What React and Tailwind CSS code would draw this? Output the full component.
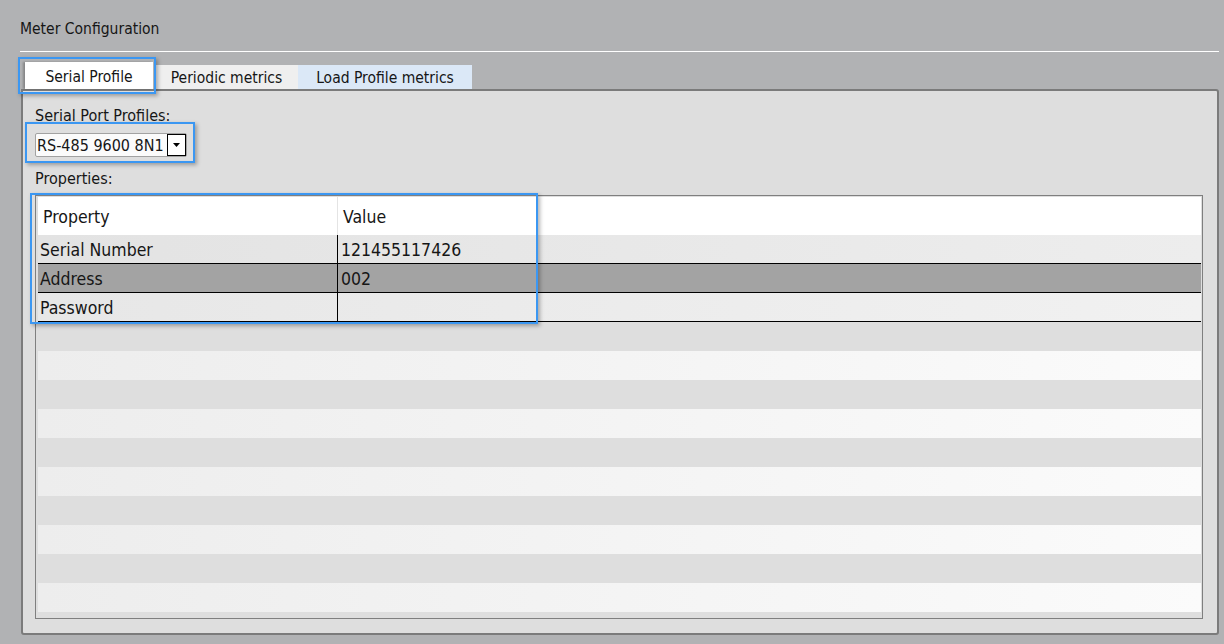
import React from "react";

const F = "font-['DejaVu_Sans_Condensed','Liberation_Sans',sans-serif]";

function Tab({ children, className }) {
  return (
    <div className={`flex items-center justify-center pt-[2px] text-[15.5px] leading-[20px] ${className}`}>
      {children}
    </div>
  );
}

const rows = [
  { k: "Serial Number", v: "121455117426", bg: "bg-linear-to-r from-[#e3e3e3] to-[#ededed]" },
  { k: "Address", v: "002", bg: "bg-[#a3a3a3]" },
  { k: "Password", v: "", bg: "bg-linear-to-r from-[#e7e7e7] to-[#f1f1f1]" },
];

export default function App() {
  const fillers = Array.from({ length: 11 }, (_, i) => i);
  return (
    <div className={`relative w-[1224px] h-[644px] overflow-hidden bg-[#b1b2b4] text-[#161616] ${F}`}>
      <div className="pl-[20px] pt-[19px] text-[15.5px] leading-[20px]">Meter Configuration</div>
      <div className="ml-[20px] mt-[12px] h-px w-[1199px] bg-white" />

      <div className="ml-[21px] mt-[10px] w-[1198px]">
        <div className="flex h-[27px] items-end pl-[4px]">
          <Tab className="h-[27px] w-[128px] bg-white shadow-[-2px_0_2px_rgba(0,0,0,0.25)]">Serial Profile</Tab>
          <div className="w-[2px]" />
          <Tab className="h-[24px] w-[143px] bg-[#efefef]">Periodic metrics</Tab>
          <Tab className="h-[24px] w-[174px] bg-[#dbe8f7]">Load Profile metrics</Tab>
        </div>

        <div className="h-[546px] rounded-[3px] rounded-tl-none border-2 border-[#7b7b7b] bg-[#dedede] pl-[12px] pt-[15px]">
          <div className="text-[16px] leading-[20px]">Serial Port Profiles:</div>

          <div className="mt-[7px] flex h-[24px] w-[152px] rounded-[2px] border border-[#a2a2a2] bg-[#fbfbfb]">
            <div className="flex-1 overflow-hidden whitespace-nowrap pl-[1px] pt-[1px] text-[16px] leading-[22px]">RS-485 9600 8N1</div>
            <div className="flex w-[19px] items-center justify-center border border-black bg-white">
              <svg width="8" height="5" viewBox="0 0 8 5">
                <path d="M0 0H7L3.5 4Z" fill="#000" />
              </svg>
            </div>
          </div>

          <div className="mt-[12px] text-[16px] leading-[20px]">Properties:</div>

          <div className="mt-[6px] flex h-[424px] w-[1168px] flex-col border border-[#7f7f7f] pl-[2px] pr-[1px] pt-[1px]">
            <div className="flex-1 overflow-hidden text-[17.5px]">
              <div className="flex h-[38px] bg-white">
                <div className="flex w-[300px] items-center border-r border-[#e4e4e4] pl-[5px] pt-[2px]">Property</div>
                <div className="flex flex-1 items-center pl-[5px] pt-[2px]">Value</div>
              </div>
              {rows.map((r) => (
                <div key={r.k} className={`flex h-[29px] border-b border-black ${r.bg}`}>
                  <div className="flex w-[300px] items-center border-r border-black pl-[2px] pt-[3px]">{r.k}</div>
                  <div className="flex flex-1 items-center pl-[3px] pt-[3px]">{r.v}</div>
                </div>
              ))}
              {fillers.map((i) => (
                <div
                  key={i}
                  className={`h-[29px] ${i % 2 === 0 ? "bg-[#dedede]" : "bg-linear-to-r from-[#ededed] to-[#fbfbfb]"}`}
                />
              ))}
            </div>
          </div>
        </div>
      </div>

      <div className="pointer-events-none absolute left-[18px] top-[57px] h-[37px] w-[138px] border-2 border-[#3b97f2] shadow-[2px_2px_4px_rgba(0,0,0,0.3)]" />
      <div className="pointer-events-none absolute left-[25px] top-[122px] h-[41px] w-[170px] border-2 border-[#3b97f2] shadow-[2px_2px_4px_rgba(0,0,0,0.3)]" />
      <div className="pointer-events-none absolute left-[30px] top-[193px] h-[131px] w-[508px] border-2 border-[#3b97f2] shadow-[2px_2px_4px_rgba(0,0,0,0.3)]" />
    </div>
  );
}
